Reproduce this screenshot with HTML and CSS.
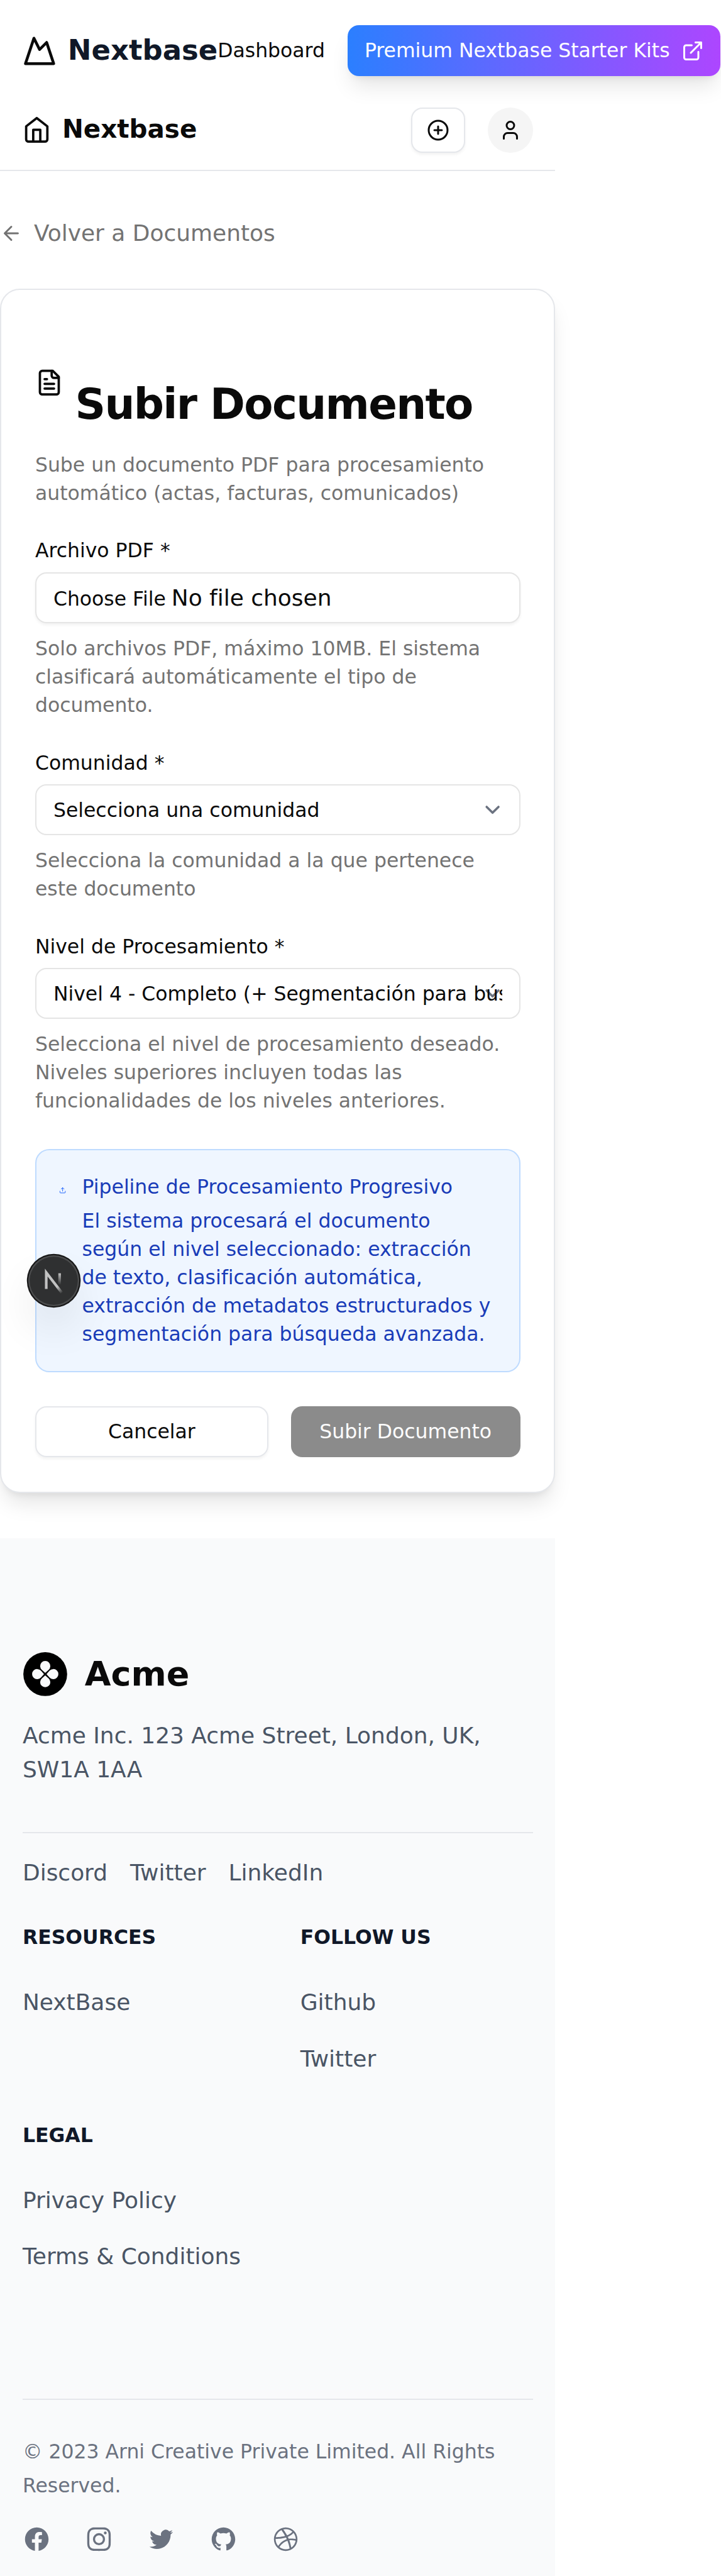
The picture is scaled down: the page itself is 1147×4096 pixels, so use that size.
FILE: index.html
```html
<!DOCTYPE html>
<html lang="es">
<head>
<meta charset="utf-8">
<title>Subir Documento</title>
<link rel="stylesheet" href="styles.css">
</head>
<body>
<div class="page">
  <header class="site-header">
    <a class="brand">
      <svg class="icon i24" viewBox="0 0 24 24"><path d="m8 3 4 8 5-5 5 15H2L8 3z"/></svg>
      <span>Nextbase</span>
    </a>
    <nav class="site-nav">
      <a>Dashboard</a>
      <a class="premium">
        <span>Premium Nextbase Starter Kits</span>
        <svg class="icon i16" viewBox="0 0 24 24"><path d="M15 3h6v6M10 14 21 3M18 13v6a2 2 0 0 1-2 2H5a2 2 0 0 1-2-2V8a2 2 0 0 1 2-2h6"/></svg>
      </a>
    </nav>
  </header>

  <div class="app-bar">
    <a class="home">
      <svg class="icon i20" viewBox="0 0 24 24"><path d="m3 9 9-7 9 7v11a2 2 0 0 1-2 2H5a2 2 0 0 1-2-2z"/><path d="M9 22V12h6v10"/></svg>
      <span>Nextbase</span>
    </a>
    <div class="actions">
      <button class="add"><svg class="icon i16" viewBox="0 0 24 24"><circle cx="12" cy="12" r="10"/><path d="M8 12h8M12 8v8"/></svg></button>
      <span class="avatar"><svg class="icon i16" viewBox="0 0 24 24"><path d="M19 21v-2a4 4 0 0 0-4-4H9a4 4 0 0 0-4 4v2"/><circle cx="12" cy="7" r="4"/></svg></span>
    </div>
  </div>

  <main class="main">
    <a class="back">
      <svg class="icon i16" viewBox="0 0 24 24"><path d="m12 19-7-7 7-7M19 12H5"/></svg>
      <span>Volver a Documentos</span>
    </a>

    <section class="card">
      <div class="card-title">
        <svg class="icon i20" viewBox="0 0 24 24"><path d="M15 2H6a2 2 0 0 0-2 2v16a2 2 0 0 0 2 2h12a2 2 0 0 0 2-2V7Z"/><path d="M14 2v4a2 2 0 0 0 2 2h4M10 9H8M16 13H8M16 17H8"/></svg>
        <h1>Subir Documento</h1>
      </div>
      <p class="muted">Sube un documento PDF para procesamiento automático (actas, facturas, comunicados)</p>

      <div class="field">
        <label>Archivo PDF *</label>
        <div class="control file"><span>Choose File</span><span class="file-name">No file chosen</span></div>
        <p class="muted">Solo archivos PDF, máximo 10MB. El sistema clasificará automáticamente el tipo de documento.</p>
      </div>

      <div class="field">
        <label>Comunidad *</label>
        <div class="control select">
          <svg class="chevron" viewBox="0 0 20 20"><path d="m6 8 4 4 4-4"/></svg>
          <span class="value">Selecciona una comunidad</span>
        </div>
        <p class="muted">Selecciona la comunidad a la que pertenece este documento</p>
      </div>

      <div class="field">
        <label>Nivel de Procesamiento *</label>
        <div class="control select">
          <svg class="chevron" viewBox="0 0 20 20"><path d="m6 8 4 4 4-4"/></svg>
          <span class="value">Nivel 4 - Completo (+ Segmentación para búsqueda)</span>
        </div>
        <p class="muted">Selecciona el nivel de procesamiento deseado. Niveles superiores incluyen todas las funcionalidades de los niveles anteriores.</p>
      </div>

      <div class="notice">
        <svg class="icon notice-icon" viewBox="0 0 24 24"><path d="M21 15v4a2 2 0 0 1-2 2H5a2 2 0 0 1-2-2v-4M17 8l-5-5-5 5M12 3v12"/></svg>
        <div class="notice-text">
          <h2>Pipeline de Procesamiento Progresivo</h2>
          <p>El sistema procesará el documento según el nivel seleccionado: extracción de texto, clasificación automática, extracción de metadatos estructurados y segmentación para búsqueda avanzada.</p>
        </div>
      </div>

      <div class="buttons">
        <button class="cancel">Cancelar</button>
        <button class="submit">Subir Documento</button>
      </div>
    </section>
  </main>

  <footer class="footer">
    <div class="company">
      <svg class="company-logo" viewBox="0 0 32 32">
        <circle cx="16" cy="16" r="15.5"/>
        <g fill="#f9fafb">
          <path id="petal" d="M16 15.1 13.62 13A3.6 3.6 0 1 1 18.38 13Z"/>
          <use href="#petal" transform="rotate(90 16 16)"/>
          <use href="#petal" transform="rotate(180 16 16)"/>
          <use href="#petal" transform="rotate(270 16 16)"/>
        </g>
      </svg>
      <span>Acme</span>
    </div>
    <p class="address">Acme Inc. 123 Acme Street, London, UK, SW1A 1AA</p>
    <div class="inline-links"><a>Discord</a><a>Twitter</a><a>LinkedIn</a></div>
    <div class="link-groups">
      <div class="group"><h3>RESOURCES</h3><a>NextBase</a></div>
      <div class="group"><h3>FOLLOW US</h3><a>Github</a><a>Twitter</a></div>
      <div class="group"><h3>LEGAL</h3><a>Privacy Policy</a><a>Terms &amp; Conditions</a></div>
    </div>
    <div class="legal">
      <p>© 2023 Arni Creative Private Limited. All Rights Reserved.</p>
      <div class="social">
        <svg viewBox="0 0 24 24"><path d="M22 12c0-5.523-4.477-10-10-10S2 6.477 2 12c0 4.991 3.657 9.128 8.438 9.878v-6.987h-2.54V12h2.54V9.797c0-2.506 1.492-3.89 3.777-3.89 1.094 0 2.238.195 2.238.195v2.46h-1.26c-1.243 0-1.63.771-1.63 1.562V12h2.773l-.443 2.89h-2.33v6.988C18.343 21.128 22 16.991 22 12z"/></svg>
        <svg viewBox="0 0 24 24"><path fill-rule="evenodd" d="M12.315 2c2.43 0 2.784.013 3.808.06 1.064.049 1.791.218 2.427.465a4.902 4.902 0 011.772 1.153 4.902 4.902 0 011.153 1.772c.247.636.416 1.363.465 2.427.048 1.067.06 1.407.06 4.123v.08c0 2.643-.012 2.987-.06 4.043-.049 1.064-.218 1.791-.465 2.427a4.902 4.902 0 01-1.153 1.772 4.902 4.902 0 01-1.772 1.153c-.636.247-1.363.416-2.427.465-1.067.048-1.407.06-4.123.06h-.08c-2.643 0-2.987-.012-4.043-.06-1.064-.049-1.791-.218-2.427-.465a4.902 4.902 0 01-1.772-1.153 4.902 4.902 0 01-1.153-1.772c-.247-.636-.416-1.363-.465-2.427-.047-1.024-.06-1.379-.06-3.808v-.63c0-2.43.013-2.784.06-3.808.049-1.064.218-1.791.465-2.427a4.902 4.902 0 011.153-1.772A4.902 4.902 0 015.45 2.525c.636-.247 1.363-.416 2.427-.465C8.901 2.013 9.256 2 11.685 2h.63zm-.081 1.802h-.468c-2.456 0-2.784.011-3.807.058-.975.045-1.504.207-1.857.344-.467.182-.8.398-1.15.748-.35.35-.566.683-.748 1.15-.137.353-.3.882-.344 1.857-.047 1.023-.058 1.351-.058 3.807v.468c0 2.456.011 2.784.058 3.807.045.975.207 1.504.344 1.857.182.466.399.8.748 1.15.35.35.683.566 1.15.748.353.137.882.3 1.857.344 1.054.048 1.37.058 4.041.058h.08c2.597 0 2.917-.01 3.96-.058.976-.045 1.505-.207 1.858-.344.466-.182.8-.398 1.15-.748.35-.35.566-.683.748-1.15.137-.353.3-.882.344-1.857.048-1.055.058-1.37.058-4.041v-.08c0-2.597-.01-2.917-.058-3.96-.045-.976-.207-1.505-.344-1.858a3.097 3.097 0 00-.748-1.15 3.098 3.098 0 00-1.15-.748c-.353-.137-.882-.3-1.857-.344-1.023-.047-1.351-.058-3.807-.058zM12 6.865a5.135 5.135 0 110 10.27 5.135 5.135 0 010-10.27zm0 1.802a3.333 3.333 0 100 6.666 3.333 3.333 0 000-6.666zm5.338-3.205a1.2 1.2 0 110 2.4 1.2 1.2 0 010-2.4z"/></svg>
        <svg viewBox="0 0 24 24"><path d="M8.29 20.251c7.547 0 11.675-6.253 11.675-11.675 0-.178 0-.355-.012-.53A8.348 8.348 0 0022 5.92a8.19 8.19 0 01-2.357.646 4.118 4.118 0 001.804-2.27 8.224 8.224 0 01-2.605.996 4.107 4.107 0 00-6.993 3.743 11.65 11.65 0 01-8.457-4.287 4.106 4.106 0 001.27 5.477A4.072 4.072 0 012.8 9.713v.052a4.105 4.105 0 003.292 4.022 4.095 4.095 0 01-1.853.07 4.108 4.108 0 003.834 2.85A8.233 8.233 0 012 18.407a11.616 11.616 0 006.29 1.84"/></svg>
        <svg viewBox="0 0 24 24"><path d="M12 2C6.477 2 2 6.484 2 12.017c0 4.425 2.865 8.18 6.839 9.504.5.092.682-.217.682-.483 0-.237-.008-.868-.013-1.703-2.782.605-3.369-1.343-3.369-1.343-.454-1.158-1.11-1.466-1.11-1.466-.908-.62.069-.608.069-.608 1.003.07 1.531 1.032 1.531 1.032.892 1.53 2.341 1.088 2.91.832.092-.647.35-1.088.636-1.338-2.22-.253-4.555-1.113-4.555-4.951 0-1.093.39-1.988 1.029-2.688-.103-.253-.446-1.272.098-2.65 0 0 .84-.27 2.75 1.026A9.564 9.564 0 0112 6.844c.85.004 1.705.115 2.504.337 1.909-1.296 2.747-1.027 2.747-1.027.546 1.379.202 2.398.1 2.651.64.7 1.028 1.595 1.028 2.688 0 3.848-2.339 4.695-4.566 4.943.359.309.678.92.678 1.855 0 1.338-.012 2.419-.012 2.747 0 .268.18.58.688.482A10.019 10.019 0 0022 12.017C22 6.484 17.522 2 12 2z"/></svg>
        <svg viewBox="0 0 24 24"><path fill-rule="evenodd" d="M12 2C6.48 2 2 6.48 2 12s4.48 10 10 10c5.51 0 10-4.48 10-10S17.51 2 12 2zm6.605 4.61a8.502 8.502 0 011.93 5.314c-.281-.054-3.101-.629-5.943-.271-.065-.141-.12-.293-.184-.445a25.416 25.416 0 00-.564-1.236c3.145-1.28 4.577-3.124 4.761-3.362zM12 3.475c2.17 0 4.154.813 5.662 2.148-.152.216-1.443 1.941-4.48 3.08-1.399-2.57-2.95-4.675-3.189-5A8.687 8.687 0 0112 3.475zm-3.633.803a53.896 53.896 0 013.167 4.935c-3.992 1.063-7.517 1.04-7.896 1.04a8.581 8.581 0 014.729-5.975zM3.453 12.01v-.26c.37.01 4.512.065 8.775-1.215.25.477.477.965.694 1.453-.109.033-.228.065-.336.098-4.404 1.42-6.747 5.303-6.942 5.629a8.522 8.522 0 01-2.19-5.705zM12 20.547a8.482 8.482 0 01-5.239-1.8c.152-.315 1.888-3.656 6.703-5.337.022-.01.033-.01.054-.022a35.318 35.318 0 011.823 6.475 8.4 8.4 0 01-3.341.684zm4.761-1.465c-.086-.52-.542-3.015-1.659-6.084 2.679-.423 5.022.271 5.314.369a8.468 8.468 0 01-3.655 5.715z"/></svg>
      </div>
    </div>
  </footer>

  <div class="dev-badge">
    <svg viewBox="0 0 40 40">
      <defs>
        <linearGradient id="stroke-a" gradientUnits="userSpaceOnUse" x1="9.96" y1="11.12" x2="13.6" y2="15.6"><stop stop-color="#c2c2c2"/><stop offset="1" stop-color="#c2c2c2" stop-opacity="0"/></linearGradient>
        <linearGradient id="stroke-b" gradientUnits="userSpaceOnUse" x1="11.82" y1="1.4" x2="11.79" y2="9.63"><stop stop-color="#c2c2c2"/><stop offset="1" stop-color="#c2c2c2" stop-opacity="0"/></linearGradient>
      </defs>
      <g transform="translate(12.6 13)" fill="none" stroke-width="1.86">
        <path stroke="url(#stroke-a)" d="M13.3 15.2 2.34 1v11.6"/>
        <path stroke="url(#stroke-b)" d="M11.825 1.5v11.6"/>
      </g>
    </svg>
  </div>
</div>
</body>
</html>
```
FILE: styles.css
```css
* { box-sizing: border-box; margin: 0; padding: 0; }

html, body { background: #fff; }

body {
  height: 4096px;
  overflow: hidden;
  font-family: "DejaVu Sans", sans-serif;
  color: #0a0a0a;
}

.page {
  zoom: 2.248;
  position: relative;
  width: 393px;
  height: 1822.1px;
  font-size: 16px;
  line-height: 24px;
}

button { font: inherit; color: inherit; background: none; border: 0; }

.icon {
  display: block;
  flex: none;
  fill: none;
  stroke: currentColor;
  stroke-width: 2;
  stroke-linecap: round;
  stroke-linejoin: round;
}
.i16 { width: 16px; height: 16px; }
.i20 { width: 20px; height: 20px; }
.i24 { width: 24px; height: 24px; }

/* Marketing header: its navigation runs past the 393px column */
.site-header {
  display: flex;
  align-items: center;
  height: 72px;
  padding-left: 16px;
  width: 510px;
}
.brand {
  display: flex;
  align-items: center;
  gap: 8px;
  font-size: 20px;
  line-height: 28px;
  font-weight: 700;
}
.brand span { color: #101828; }
.site-nav {
  flex: 1;
  display: flex;
  align-items: center;
  gap: 16px;
  font-size: 14px;
  line-height: 20px;
  white-space: nowrap;
}
.premium {
  flex: 1;
  display: flex;
  align-items: center;
  justify-content: center;
  gap: 8px;
  height: 36px;
  border-radius: 8px;
  color: #fff;
  background: linear-gradient(to right, #2b7fff, #ad46ff);
  box-shadow: 0 10px 15px -3px rgba(0, 0, 0, .1), 0 4px 6px -4px rgba(0, 0, 0, .1);
}

.app-bar {
  display: flex;
  justify-content: space-between;
  align-items: center;
  height: 49px;
  padding: 0 16px 8px;
  border-bottom: 1px solid #e5e7eb;
}
.home {
  display: flex;
  align-items: center;
  gap: 8px;
  font-size: 18px;
  line-height: 28px;
  font-weight: 700;
}
.home span { margin-bottom: 1.6px; }
.actions { display: flex; align-items: center; gap: 16px; }
.add, .avatar {
  display: flex;
  align-items: center;
  justify-content: center;
  height: 32px;
}
.add {
  width: 38px;
  border: 1px solid #e5e7eb;
  border-radius: 8px;
  background: #fff;
  box-shadow: 0 1px 2px rgba(0, 0, 0, .05);
}
.avatar { width: 32px; border-radius: 50%; background: #f5f5f5; }

.main { padding: 32px 0; }
.back {
  display: flex;
  align-items: center;
  gap: 8px;
  margin-bottom: 27px;
  color: #737373;
}

.card {
  height: 852px;
  padding: 56px 24px 24px;
  border: 1px solid #e5e7eb;
  border-radius: 14px;
  background: #fff;
  box-shadow: 0 10px 15px -3px rgba(0, 0, 0, .1), 0 4px 6px -4px rgba(0, 0, 0, .1);
}
.card-title { display: flex; align-items: flex-start; gap: 8px; margin-bottom: 14.7px; }
.card-title h1 {
  margin: 7.2px 0 0 .3px;
  font-size: 30px;
  line-height: 36px;
  letter-spacing: -.025em;
  white-space: nowrap;
}
.muted { font-size: 14px; line-height: 20px; color: #737373; }

.field { margin-top: 24px; font-size: 14px; }
.field label { display: block; line-height: 14px; margin-bottom: 8px; }
.control {
  position: relative;
  height: 36px;
  padding: 0 12px;
  margin-bottom: 8px;
  border: 1px solid #e5e5e5;
  border-radius: 8px;
  line-height: 34.8px;
  white-space: nowrap;
}
.file {
  display: flex;
  align-items: baseline;
  gap: 4px;
  box-shadow: 0 1px 2px rgba(0, 0, 0, .05);
}
.file-name { font-size: 16px; }
.value { position: relative; display: block; overflow: hidden; height: 34px; }
.chevron {
  position: absolute;
  top: 6.5px;
  right: 8px;
  width: 21px;
  height: 21px;
  fill: none;
  stroke: #6b7280;
  stroke-width: 1.5;
  stroke-linecap: round;
  stroke-linejoin: round;
}

.notice {
  display: flex;
  gap: 11.3px;
  margin-top: 24px;
  height: 158px;
  padding: 16px;
  border: 1px solid #bedbff;
  border-radius: 10px;
  background: #eff6ff;
  color: #193cb8;
  font-size: 14px;
  line-height: 20px;
}
.notice-icon { width: 5px; height: 5px; margin-top: 10px; color: #155dfc; }
.notice-text { flex: none; width: 291.5px; }
.notice h2 { font-size: inherit; font-weight: 400; margin-bottom: 4px; }

.buttons {
  display: flex;
  gap: 16px;
  margin-top: 24px;
  font-size: 14px;
}
.buttons button { height: 36px; border-radius: 8px; line-height: 20px; }
.cancel {
  width: 165px;
  border: 1px solid #e5e7eb;
  box-shadow: 0 1px 2px rgba(0, 0, 0, .05);
}
.buttons .submit { flex: 1; background: #8b8b8b; color: #fdfdfd; }

.footer {
  height: 734.3px;
  padding: 80px 16px 0;
  background: #f9fafb;
  color: #4a5565;
}
.company {
  display: flex;
  align-items: center;
  gap: 12px;
  margin-bottom: 16px;
  font-size: 24px;
  line-height: 32px;
  font-weight: 700;
  color: #0a0a0a;
}
.company-logo { width: 32px; height: 32px; fill: #000; }
.address { padding-bottom: 32px; border-bottom: 1px solid #e5e7eb; }
.inline-links { display: flex; gap: 16px; padding-top: 16px; }
.link-groups {
  display: grid;
  grid-template-columns: 1fr 1fr;
  gap: 32px;
  margin: 23.5px 0 88.5px;
}
.group { display: flex; flex-direction: column; gap: 16px; }
.group h3 {
  margin-bottom: 8px;
  font-size: 14px;
  line-height: 20px;
  color: #101828;
}
.legal {
  padding-top: 24.6px;
  border-top: 1px solid #e5e7eb;
  font-size: 14px;
  color: #6b7280;
}
.social { display: flex; gap: 24px; margin-top: 15.6px; }
.social svg { width: 20px; height: 20px; fill: #6b7280; }

/* Floating framework indicator, over the page */
.dev-badge {
  position: absolute;
  left: 20px;
  top: 888px;
  width: 36px;
  height: 36px;
  border-radius: 50%;
  background: #2f3031;
  box-shadow: 0 0 0 1px #171717, inset 0 0 0 1px rgba(255, 255, 255, .14), 0 16px 32px -8px rgba(0, 0, 0, .24);
}
.dev-badge svg { display: block; width: 40px; height: 40px; margin: -2px; }
```
